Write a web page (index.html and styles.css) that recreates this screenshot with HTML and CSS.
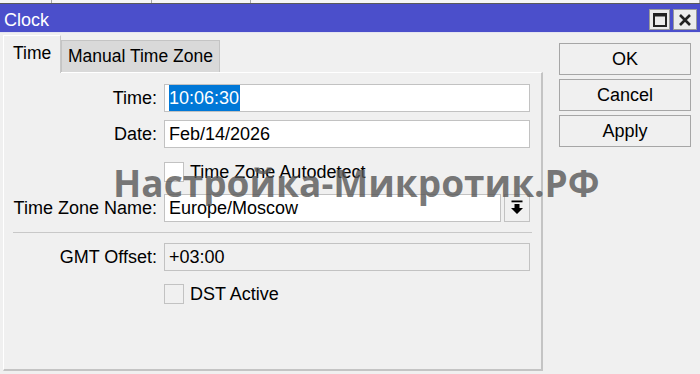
FILE: index.html
```html
<!DOCTYPE html>
<html>
<head>
<meta charset="utf-8">
<link rel="stylesheet" href="styles.css">
</head>
<body>
<div class="strip">
  <div class="strip-inner">
    <span class="hcell hcell-first"></span>
    <span class="hcell">Tx Rate</span>
    <span class="hcell">Rx Rate</span>
    <span class="hcell hcell-last"></span>
  </div>
</div>
<div class="titlebar">
  <span class="title">Clock</span>
  <div class="wbtns">
    <div class="wbtn">
      <svg width="14" height="14" viewBox="0 0 14 14"><rect x="1" y="1" width="12" height="12" fill="none" stroke="#222" stroke-width="2"/><rect x="1" y="1" width="12" height="2.5" fill="#222"/></svg>
    </div>
    <div class="wbtn wbtn-close">
      <svg width="14" height="14" viewBox="0 0 14 14"><path d="M2 2 L12 12 M12 2 L2 12" stroke="#222" stroke-width="2.6"/></svg>
    </div>
  </div>
</div>
<div class="main">
  <div class="left">
    <div class="tabs">
      <div class="tab tab-active">Time</div>
      <div class="tab">Manual Time Zone</div>
    </div>
    <div class="panel">
      <div class="row row-first">
        <label class="lbl">Time:</label>
        <div class="field"><span class="sel">10:06:30</span></div>
      </div>
      <div class="row">
        <label class="lbl">Date:</label>
        <div class="field">Feb/14/2026</div>
      </div>
      <div class="row row-check">
        <span class="lbl"></span>
        <div class="check"><span class="box box-white"></span><span class="check-text">Time Zone Autodetect</span></div>
      </div>
      <div class="row row-tz">
        <label class="lbl">Time Zone Name:</label>
        <div class="field field-tz">Europe/Moscow</div>
        <div class="dd">
          <svg width="14" height="16" viewBox="0 0 14 16"><rect x="1.5" y="0.5" width="11" height="1.8" fill="#000"/><path d="M4.5 4 H9.5 V8 H13 L7 14 L1 8 H4.5 Z" fill="#000"/></svg>
        </div>
      </div>
      <div class="sep"></div>
      <div class="row row-gmt">
        <label class="lbl">GMT Offset:</label>
        <div class="field field-ro">+03:00</div>
      </div>
      <div class="row row-dst">
        <span class="lbl"></span>
        <div class="check"><span class="box box-grey"></span><span class="check-text">DST Active</span></div>
      </div>
    </div>
  </div>
  <div class="actions">
    <div class="btn">OK</div>
    <div class="btn">Cancel</div>
    <div class="btn">Apply</div>
  </div>
</div>
<div class="watermark">Настройка-Микротик.РФ</div>
</body>
</html>
```

FILE: styles.css
```css
* { box-sizing: border-box; }
html, body {
  margin: 0;
  padding: 0;
  width: 700px;
  height: 374px;
  overflow: hidden;
  background: #f0f0f0;
  font-family: "Liberation Sans", Arial, sans-serif;
  font-size: 18px;
  color: #000;
  position: relative;
}

.strip {
  height: 4px;
  background: #f6f6f6;
  border-bottom: 1px solid #5a5a5a;
  overflow: hidden;
}
.strip-inner {
  display: flex;
  margin-top: -14px;
  height: 17px;
}
.hcell {
  width: 100px;
  padding-left: 5px;
  border-right: 1px solid #a8a8a8;
  font-size: 18px;
  line-height: 17px;
  color: #222;
}
.hcell-first { width: 52px; padding: 0; }
.hcell-last { width: 450px; }

.titlebar {
  height: 29px;
  background: #4b4fcb;
  border-bottom: 1px solid #e4e4f0;
  display: flex;
  align-items: center;
  justify-content: space-between;
}
.title {
  color: #fff;
  padding-left: 4px;
  padding-top: 5px;
  font-size: 18px;
}
.wbtns {
  display: flex;
  gap: 3px;
  margin-right: 3px;
  align-self: flex-end;
  margin-bottom: 2px;
}
.wbtn {
  width: 21px;
  height: 21px;
  background: #ececec;
  border: 1px solid #9a9a9a;
  display: flex;
  align-items: center;
  justify-content: center;
}
.wbtn-close { width: 24px; }

.main {
  display: flex;
  padding-left: 3px;
}
.left {
  width: 540px;
  display: flex;
  flex-direction: column;
}
.tabs {
  display: flex;
  align-items: flex-end;
  height: 39px;
}
.tab {
  height: 32px;
  padding: 0 6px;
  background: #d9d9d9;
  border: 1px solid #c4c4c4;
  border-bottom: none;
  display: flex;
  align-items: center;
  font-size: 17.5px;
}
.tab-active {
  width: 58px;
  height: 38px;
  padding-left: 9px;
  padding-bottom: 3px;
  background: #f0f0f0;
  border-left: 1px solid #ffffff;
  border-top: 1px solid #ffffff;
  border-right: 1px solid #c8c8c8;
  margin-bottom: -1px;
  position: relative;
  z-index: 1;
}

.panel {
  height: 299px;
  border-top: 1px solid #ffffff;
  border-left: 1px solid #ffffff;
  border-right: 2px solid #c4c4c4;
  border-bottom: 2px solid #c4c4c4;
  padding: 11px 10px 0 8px;
  display: flex;
  flex-direction: column;
}
.row {
  display: flex;
  align-items: center;
  height: 28px;
  margin-top: 8px;
}
.row-first { margin-top: 0; }
.row-check { margin-top: 10px; }
.row-tz { margin-top: 8px; }
.row-gmt { margin-top: 10px; }
.row-dst { margin-top: 9px; }
.lbl {
  width: 145px;
  text-align: right;
  margin-right: 7px;
  flex-shrink: 0;
  white-space: nowrap;
}
.field {
  width: 366px;
  height: 28px;
  background: #fff;
  border: 1px solid #c2c2c2;
  padding-left: 4px;
  display: flex;
  align-items: center;
  white-space: nowrap;
}
.sel {
  background: #0078d7;
  color: #fff;
  line-height: 26px;
  padding-right: 1px;
}
.field-tz {
  width: 337px;
}
.dd {
  width: 26px;
  height: 28px;
  margin-left: 3px;
  border: 1px solid #c2c2c2;
  background: #f0f0f0;
  display: flex;
  align-items: center;
  justify-content: center;
}
.field-ro {
  background: #f0f0f0;
}
.sep {
  height: 1px;
  background: #c8c8c8;
  margin: 10px 0 0 1px;
  width: 519px;
}
.check {
  display: flex;
  align-items: center;
}
.box {
  width: 20px;
  height: 20px;
  border: 1px solid #c2c2c2;
  margin-right: 6px;
}
.box-white { background: #fff; }
.box-grey { background: #f0f0f0; }

.actions {
  margin-left: 16px;
  margin-top: 10px;
  width: 132px;
  display: flex;
  flex-direction: column;
  gap: 4px;
}
.btn {
  height: 32px;
  border: 1px solid #a6a6a6;
  background: #f0f0f0;
  display: flex;
  align-items: center;
  justify-content: center;
  font-size: 18px;
}

.watermark {
  position: absolute;
  left: 113px;
  top: 159px;
  font-family: "Open Sans", "Noto Sans", sans-serif;
  font-weight: 700;
  font-size: 37px;
  line-height: 48px;
  color: rgba(85, 85, 85, 0.78);
  white-space: nowrap;
  pointer-events: none;
}
```
